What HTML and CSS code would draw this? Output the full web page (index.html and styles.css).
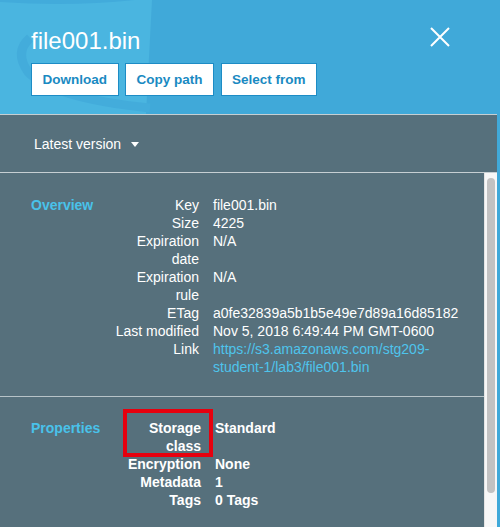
FILE: index.html
```html
<!DOCTYPE html>
<html lang="en">
<head>
<meta charset="utf-8">
<title>file001.bin</title>
<link rel="stylesheet" href="styles.css">
</head>
<body>
<div class="panel">
  <header class="head">
    <svg class="head-art" width="497" height="114" viewBox="0 0 497 114" aria-hidden="true">
      <path d="M0 0 H152 L146 114 H0 Z" fill="#4ab5e0"/>
      <path d="M0 0 H135 Q70 7 0 2 Z" fill="#42abdb"/>
      <path d="M30 38 Q14 52 28 72 Q52 98 150 108" fill="none" stroke="#43acdb" stroke-width="9"/>
    </svg>
    <div class="head-row">
      <h1 class="title">file001.bin</h1>
      <button class="close" aria-label="Close">
        <svg width="20" height="20" viewBox="0 0 20 20"><path d="M1 1 L19 19 M19 1 L1 19" stroke="#fff" stroke-width="2" fill="none"/></svg>
      </button>
    </div>
    <div class="actions">
      <button class="btn">Download</button>
      <button class="btn">Copy path</button>
      <button class="btn">Select from</button>
    </div>
  </header>
  <div class="version">
    <span>Latest version</span><span class="caret"></span>
  </div>
  <div class="body">
    <div class="content">
      <section class="sec">
        <h2 class="sec-title">Overview</h2>
        <dl class="props">
          <dt>Key</dt><dd>file001.bin</dd>
          <dt>Size</dt><dd>4225</dd>
          <dt>Expiration date</dt><dd>N/A</dd>
          <dt>Expiration rule</dt><dd>N/A</dd>
          <dt>ETag</dt><dd>a0fe32839a5b1b5e49e7d89a16d85182</dd>
          <dt>Last modified</dt><dd>Nov 5, 2018 6:49:44 PM GMT-0600</dd>
          <dt>Link</dt><dd><a class="link" href="#">https://s3.amazonaws.com/stg209-student-1/lab3/file001.bin</a></dd>
        </dl>
      </section>
      <section class="sec sec-bold">
        <h2 class="sec-title">Properties</h2>
        <dl class="props">
          <dt class="marked">Storage class<span class="mark"></span></dt><dd>Standard</dd>
          <dt>Encryption</dt><dd>None</dd>
          <dt>Metadata</dt><dd>1</dd>
          <dt>Tags</dt><dd>0 Tags</dd>
        </dl>
      </section>
    </div>
    <div class="scroll"><div class="thumb"></div></div>
  </div>
</div>
</body>
</html>
```
FILE: styles.css
```css
* { box-sizing: border-box; }
html, body { margin: 0; padding: 0; }
body {
  font-family: "Liberation Sans", Arial, sans-serif;
  font-size: 14px;
  color: #fff;
  background: #56707c;
}
.panel {
  height: 527px;
  display: flex;
  flex-direction: column;
  border-right: 3px solid #40a9d9;
  overflow: hidden;
}
.head {
  position: relative;
  height: 115px;
  flex: none;
  background: #40a9d9;
  border-bottom: 1px solid #c6cfd3;
  padding: 27px 47px 0 31px;
}
.head-art { position: absolute; left: 0; top: 0; }
.head-row, .actions { position: relative; }
.head-row {
  display: flex;
  justify-content: space-between;
  align-items: flex-start;
}
.title {
  margin: 0;
  font-size: 24px;
  line-height: 28px;
  font-weight: normal;
}
.close {
  border: 0;
  padding: 0;
  background: none;
  width: 20px;
  height: 20px;
  display: block;
}
.close svg { display: block; }
.actions {
  display: flex;
  gap: 6.5px;
  margin-top: 8px;
}
.btn {
  height: 33px;
  padding: 0 10.5px;
  background: #fff;
  border: 1px solid #1d8cc5;
  border-radius: 0;
  color: #1a8ac2;
  font-family: "Liberation Sans", Arial, sans-serif;
  font-weight: bold;
  font-size: 13.5px;
}
.version {
  flex: none;
  height: 58px;
  border-bottom: 1px solid #c6cfd3;
  display: flex;
  align-items: center;
  padding: 0 0 0 34px;
  font-size: 14px;
}
.caret {
  width: 0;
  height: 0;
  margin-left: 10px;
  margin-top: 2px;
  border-left: 4.5px solid transparent;
  border-right: 4.5px solid transparent;
  border-top: 5px solid #fff;
}
.body {
  flex: 1;
  display: flex;
  min-height: 0;
}
.content { flex: 1; }
.sec {
  display: flex;
  padding: 23px 0 20px 31px;
  line-height: 18px;
}
.sec-bold {
  border-top: 1px solid #b7c3c8;
  padding-top: 22px;
  font-weight: bold;
}
.sec-bold .props { margin-left: 2px; }
.sec-title {
  margin: 0;
  width: 80px;
  flex: none;
  font-size: 14px;
  font-weight: bold;
  color: #49c2ea;
}
.props {
  margin: 0;
  display: grid;
  grid-template-columns: 88px 262px;
  column-gap: 14px;
}
.props dt { text-align: right; }
.props dd { margin: 0; }
.link { color: #4ec4ec; text-decoration: none; }
.marked { position: relative; }
.mark {
  position: absolute;
  left: 10px;
  right: -12px;
  top: -10px;
  bottom: -2px;
  border: 4px solid #e6000e;
}
.scroll {
  flex: none;
  width: 13px;
  background: #f7f7f7;
  border-left: 1px solid #e4e4e4;
  padding: 5px 0 0 2px;
}
.thumb {
  width: 8px;
  height: 315px;
  border-radius: 4px;
  background: #c2c2c2;
}
```
